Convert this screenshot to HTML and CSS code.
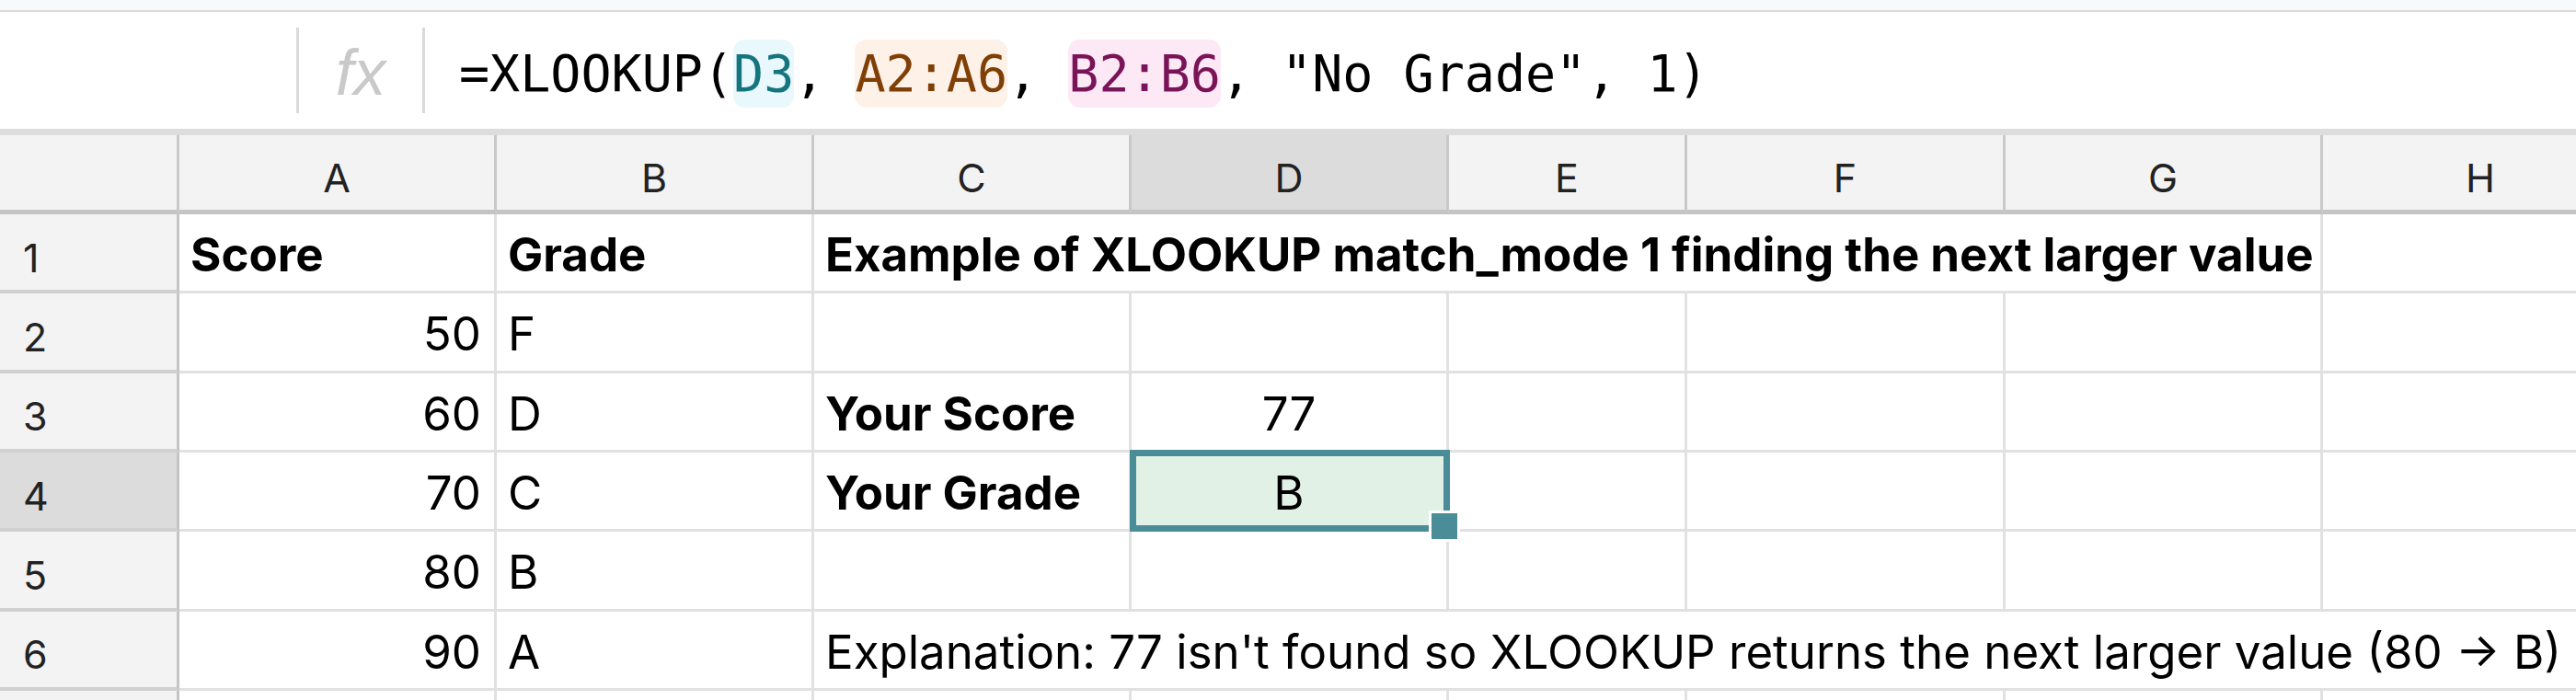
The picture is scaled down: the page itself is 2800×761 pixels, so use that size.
FILE: index.html
```html
<!DOCTYPE html>
<html>
<head>
<meta charset="utf-8">
<title>XLOOKUP match_mode 1</title>
<link rel="stylesheet" href="styles.css">
</head>
<body>
<div class="topstrip"></div>
<div class="formula-bar">
  <div class="namebox"></div>
  <div class="divider"></div>
  <div class="fx">fx</div>
  <div class="divider"></div>
  <div class="formula">=XLOOKUP(<span class="ref ref-d">D3</span>, <span class="ref ref-a">A2:A6</span>, <span class="ref ref-b">B2:B6</span>, "No Grade", 1)</div>
</div>
<div class="grid">
  <div class="corner"></div>
  <div class="ch">A</div>
  <div class="ch">B</div>
  <div class="ch">C</div>
  <div class="ch ch-sel">D</div>
  <div class="ch">E</div>
  <div class="ch">F</div>
  <div class="ch">G</div>
  <div class="ch">H</div>

  <div class="rh">1</div>
  <div class="c b">Score</div>
  <div class="c b">Grade</div>
  <div class="c b span-cg">Example of XLOOKUP match_mode 1 finding the next larger value</div>
  <div class="c"></div>

  <div class="rh">2</div>
  <div class="c r">50</div>
  <div class="c">F</div>
  <div class="c"></div>
  <div class="c"></div>
  <div class="c"></div>
  <div class="c"></div>
  <div class="c"></div>
  <div class="c"></div>

  <div class="rh">3</div>
  <div class="c r">60</div>
  <div class="c">D</div>
  <div class="c b">Your Score</div>
  <div class="c m">77</div>
  <div class="c"></div>
  <div class="c"></div>
  <div class="c"></div>
  <div class="c"></div>

  <div class="rh rh-sel">4</div>
  <div class="c r">70</div>
  <div class="c">C</div>
  <div class="c b">Your Grade</div>
  <div class="c m active">B<div class="selbox"></div><div class="handle"></div></div>
  <div class="c"></div>
  <div class="c"></div>
  <div class="c"></div>
  <div class="c"></div>

  <div class="rh">5</div>
  <div class="c r">80</div>
  <div class="c">B</div>
  <div class="c"></div>
  <div class="c"></div>
  <div class="c"></div>
  <div class="c"></div>
  <div class="c"></div>
  <div class="c"></div>

  <div class="rh">6</div>
  <div class="c r">90</div>
  <div class="c">A</div>
  <div class="c span-ch">Explanation: 77 isn't found so XLOOKUP returns the next larger value (80 → B)</div>

  <div class="rh"></div>
  <div class="c"></div>
  <div class="c"></div>
  <div class="c"></div>
  <div class="c"></div>
  <div class="c"></div>
  <div class="c"></div>
  <div class="c"></div>
  <div class="c"></div>
</div>
</body>
</html>
```

FILE: styles.css
```css
html, body {
  margin: 0;
  padding: 0;
  background: #ffffff;
}

body {
  width: 2800px;
  height: 761px;
  overflow: hidden;
  font-family: "Inter", "Roboto", "DejaVu Sans", sans-serif;
  color: #000000;
}

.topstrip {
  height: 11px;
  background: #f8f9fa;
  border-bottom: 2px solid #dcdcdc;
}

.formula-bar {
  height: 127px;
  border-bottom: 7px solid #dddddd;
  display: flex;
  align-items: center;
  background: #ffffff;
}

.namebox {
  width: 322px;
  height: 100%;
}

.divider {
  width: 3px;
  height: 93px;
  background: #dadada;
}

.fx {
  width: 134px;
  text-align: center;
  font-family: "Liberation Sans", Arial, sans-serif;
  font-style: italic;
  font-size: 70px;
  color: #c9c9c9;
  padding-top: 4px;
}

.formula {
  padding-left: 37px;
  padding-top: 7px;
  font-family: "DejaVu Sans Mono", "Liberation Mono", monospace;
  font-size: 55px;
  line-height: 74px;
  white-space: pre;
  color: #000000;
}

.ref {
  display: inline-block;
  border-radius: 13px;
}

.ref-d {
  background: #e8f8fc;
  color: #15757f;
}

.ref-a {
  background: #fdf1e8;
  color: #7f3f05;
}

.ref-b {
  background: #fde8f5;
  color: #7a1458;
}

.grid {
  display: grid;
  grid-template-columns: 195px 345px 345px 345px 345px 259px 346px 345px 345px;
  grid-template-rows: 86px repeat(6, 86.33px) 20px;
  width: 2870px;
}

.corner,
.ch {
  box-sizing: border-box;
  background: #f3f3f3;
  border-right: 3px solid #c9c9c9;
  border-bottom: 5px solid #c4c4c4;
}

.ch {
  display: flex;
  align-items: center;
  justify-content: center;
  font-size: 43px;
  color: #222222;
  padding-top: 10px;
}

.ch-sel {
  background: #dcdcdc;
}

.rh {
  box-sizing: border-box;
  background: #f3f3f3;
  border-right: 3px solid #c4c4c4;
  border-bottom: 4px solid #d0d0d0;
  display: flex;
  align-items: center;
  padding-left: 25px;
  padding-top: 11px;
  font-size: 43px;
  color: #222222;
}

.rh-sel {
  background: #dcdcdc;
}

.c {
  box-sizing: border-box;
  border-right: 3px solid #e1e1e1;
  border-bottom: 3px solid #e1e1e1;
  display: flex;
  align-items: center;
  padding: 4px 12px 0 12px;
  font-size: 51px;
  white-space: nowrap;
}

.b {
  font-weight: 700;
}

.r {
  justify-content: flex-end;
  padding-right: 14px;
}

.m {
  justify-content: center;
}

.span-cg {
  grid-column: 4 / 9;
}

.span-ch {
  grid-column: 4 / 10;
}

.active {
  position: relative;
  background: #e2f1e6;
}

.selbox {
  position: absolute;
  left: -2px;
  top: -3px;
  width: 348px;
  height: 89px;
  box-sizing: border-box;
  border: 7px solid #4a8d98;
}

.handle {
  position: absolute;
  left: 323px;
  top: 63px;
  width: 34px;
  height: 34px;
  box-sizing: border-box;
  background: #4a8d98;
  border: 3px solid #ffffff;
}
```
